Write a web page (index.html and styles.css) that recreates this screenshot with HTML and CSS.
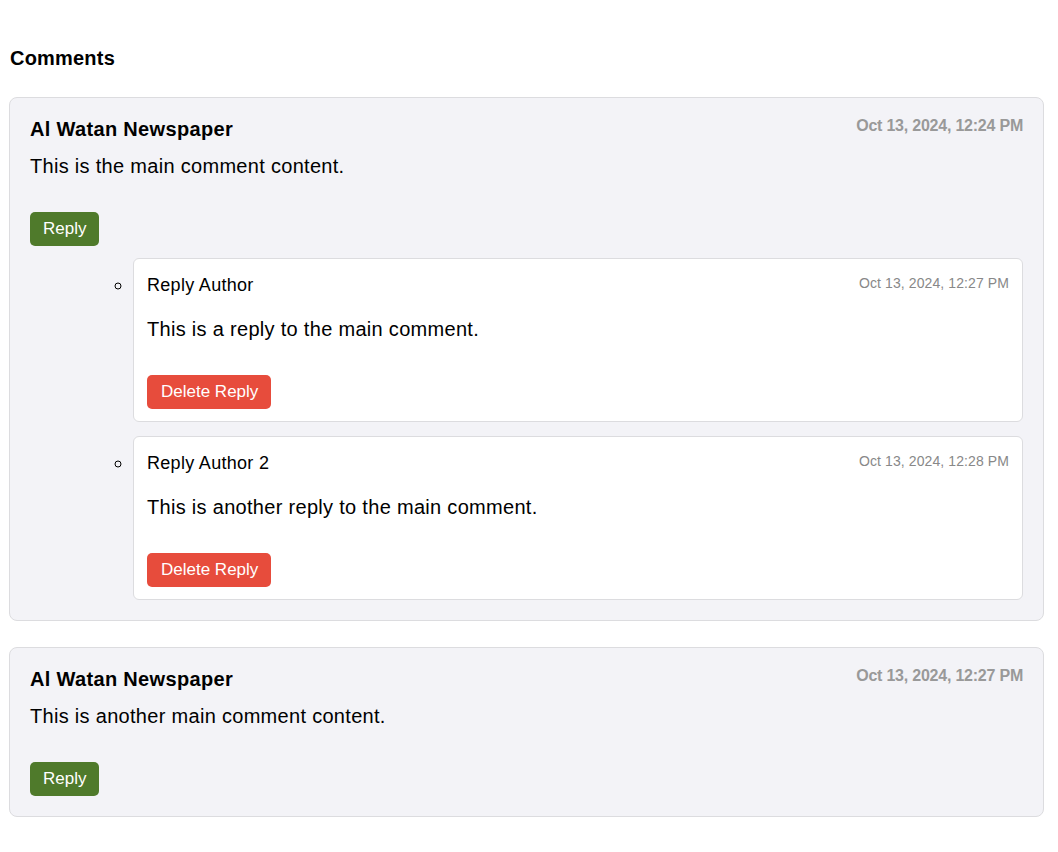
FILE: index.html
```html
<!DOCTYPE html>
<html>
<head>
<meta charset="utf-8">
<link rel="stylesheet" href="styles.css">
</head>
<body>
<div class="page">
  <h2 class="title">Comments</h2>

  <div class="comment">
    <div class="comment-head">
      <span class="author">Al Watan Newspaper</span>
      <span class="date">Oct 13, 2024, 12:24 PM</span>
    </div>
    <p class="content">This is the main comment content.</p>
    <button class="btn btn-reply">Reply</button>
    <ul class="replies">
      <li class="reply">
        <div class="reply-head">
          <span class="reply-author">Reply Author</span>
          <span class="reply-date">Oct 13, 2024, 12:27 PM</span>
        </div>
        <p class="reply-content">This is a reply to the main comment.</p>
        <button class="btn btn-delete">Delete Reply</button>
      </li>
      <li class="reply">
        <div class="reply-head">
          <span class="reply-author">Reply Author 2</span>
          <span class="reply-date">Oct 13, 2024, 12:28 PM</span>
        </div>
        <p class="reply-content">This is another reply to the main comment.</p>
        <button class="btn btn-delete">Delete Reply</button>
      </li>
    </ul>
  </div>

  <div class="comment">
    <div class="comment-head">
      <span class="author">Al Watan Newspaper</span>
      <span class="date">Oct 13, 2024, 12:27 PM</span>
    </div>
    <p class="content">This is another main comment content.</p>
    <button class="btn btn-reply">Reply</button>
  </div>
</div>
</body>
</html>
```

FILE: styles.css
```css
html, body {
  margin: 0;
  padding: 0;
  background: #ffffff;
}

body {
  font-family: "Liberation Sans", Arial, sans-serif;
  color: #000;
}

.page {
  width: 1035px;
  margin-left: 9px;
  padding-top: 47px;
}

.title {
  font-size: 20px;
  font-weight: bold;
  line-height: 23px;
  letter-spacing: 0.2px;
  margin: 0 0 27px 1px;
}

.comment {
  background: #f3f3f7;
  border: 1px solid #dcdcdf;
  border-radius: 8px;
  padding: 20px;
  margin-bottom: 26px;
  display: flex;
  flex-direction: column;
  align-items: flex-start;
}

.comment-head {
  display: flex;
  justify-content: space-between;
  align-items: flex-start;
  width: 100%;
}

.author {
  font-size: 20px;
  font-weight: bold;
  line-height: 23px;
  letter-spacing: 0.33px;
}

.date {
  font-size: 16px;
  font-weight: bold;
  color: #999999;
  line-height: 18px;
  letter-spacing: -0.22px;
  margin-top: -1px;
}

.content {
  font-size: 20px;
  line-height: 23px;
  letter-spacing: 0.3px;
  margin: 14px 0 34px;
}

.btn {
  font-family: "Liberation Sans", Arial, sans-serif;
  font-size: 17px;
  line-height: 18px;
  color: #ffffff;
  border: none;
  border-radius: 5px;
  padding: 8px 13px;
  cursor: pointer;
}

.btn-reply {
  background: #4f7a2b;
}

.btn-delete {
  background: #e74c3c;
  padding: 8px 13px 8px 14px;
}

.replies {
  list-style: circle;
  width: 100%;
  box-sizing: border-box;
  margin: 12px 0 0;
  padding: 0 0 0 103px;
  display: flex;
  flex-direction: column;
  gap: 14px;
}

.reply {
  display: list-item;
  background: #ffffff;
  border: 1px solid #dcdcdf;
  border-radius: 6px;
  padding: 15px 13px 12px;
}

.reply::marker {
  font-size: 19px;
}

.reply-head {
  display: flex;
  justify-content: space-between;
  align-items: flex-start;
}

.reply-author {
  font-size: 18px;
  line-height: 21px;
  letter-spacing: 0.3px;
}

.reply-date {
  font-size: 14px;
  color: #888888;
  line-height: 16px;
  letter-spacing: 0.1px;
}

.reply-content {
  font-size: 20px;
  line-height: 23px;
  letter-spacing: 0.3px;
  margin: 22px 0 34px;
}
```
